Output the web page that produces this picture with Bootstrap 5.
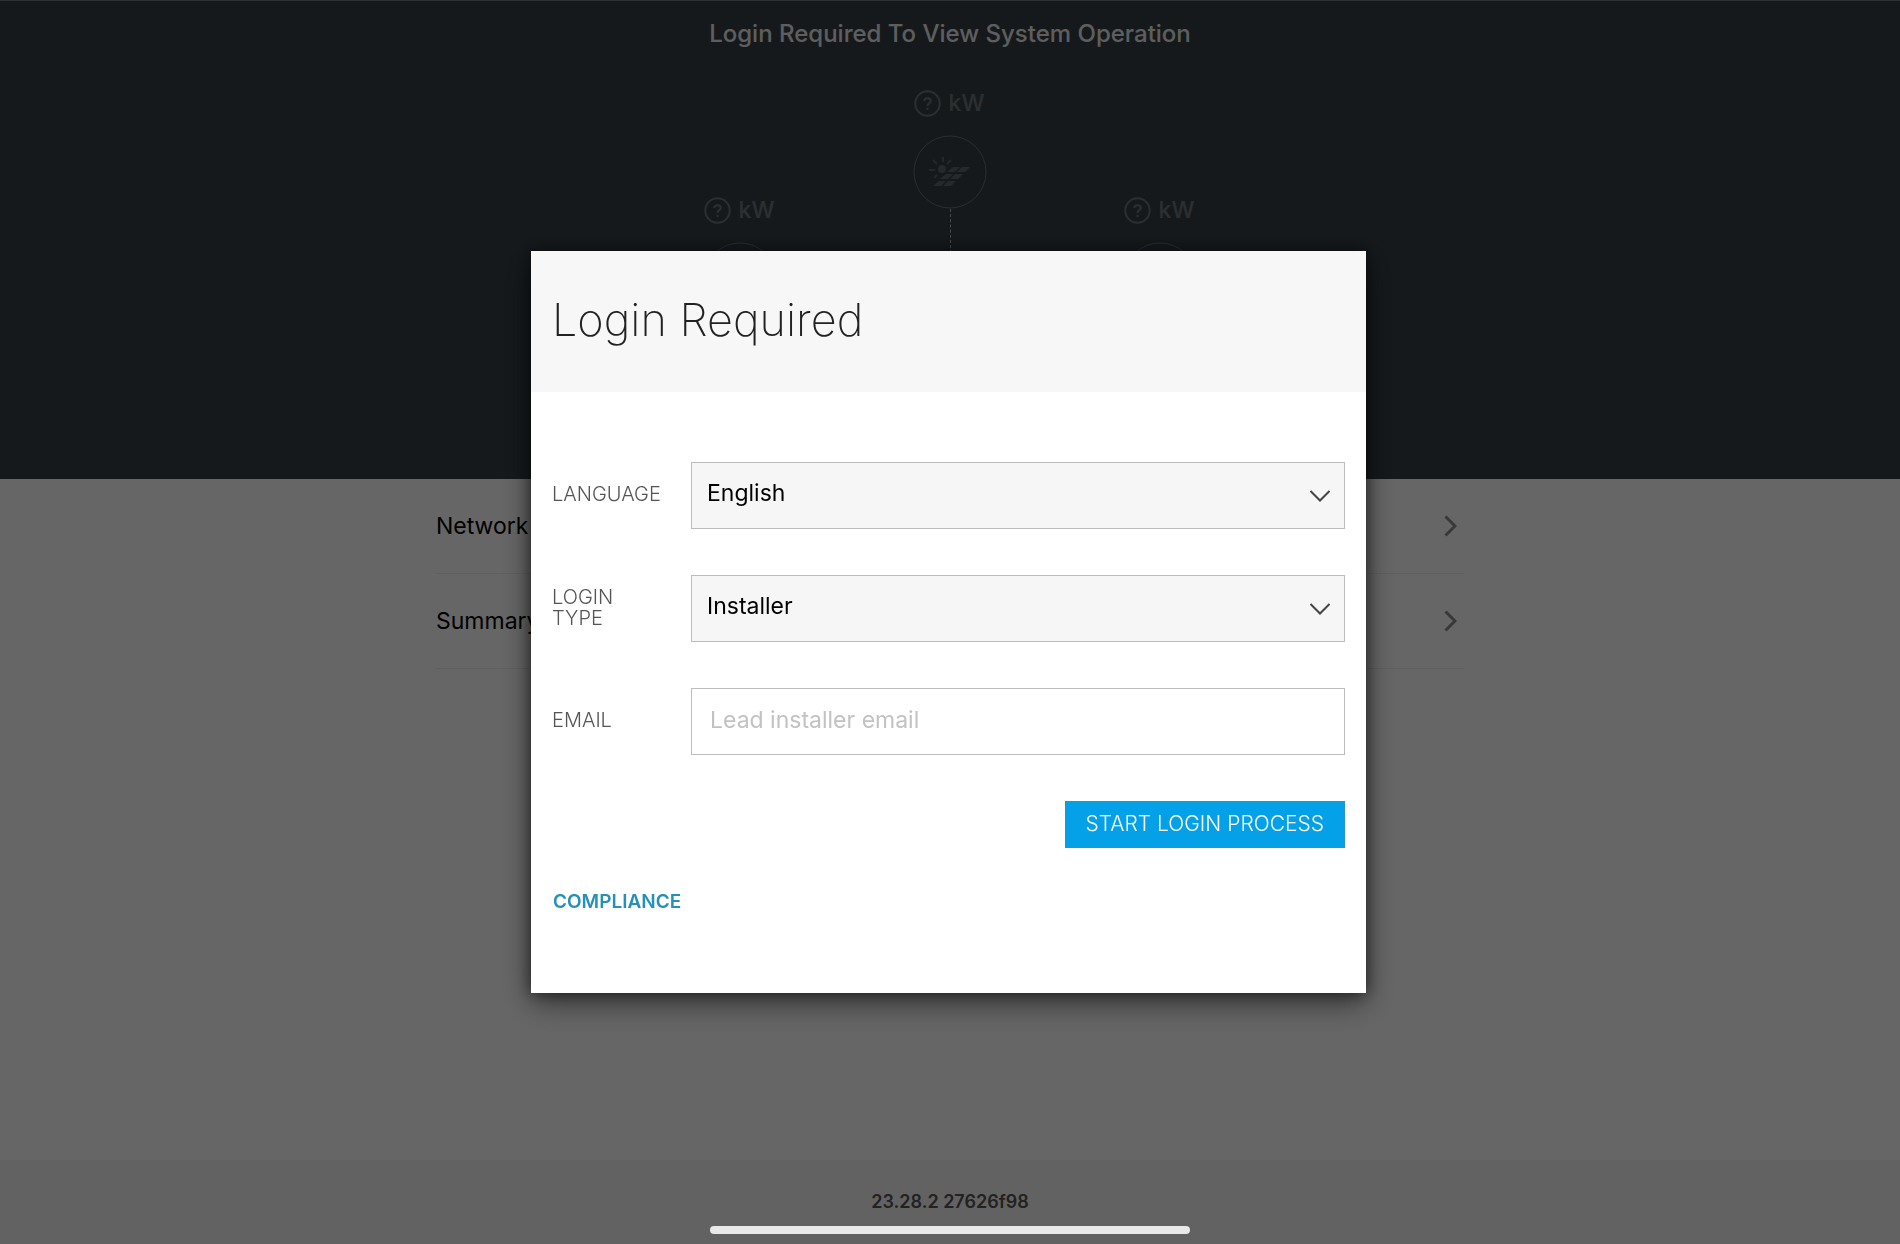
<!DOCTYPE html>
<html lang="en">
<head>
<meta charset="utf-8">
<meta name="viewport" content="width=device-width, initial-scale=1">
<title>Login Required</title>
<link href="https://cdn.jsdelivr.net/npm/bootstrap@5.3.0/dist/css/bootstrap.min.css" rel="stylesheet">
<style>
  body { font-family: Inter, "Liberation Sans", sans-serif; font-size: 23px; line-height: 28px; color: #000; background: #fff; }
  .flow-panel { background: #373f46; height: 479px; border-top: 1px solid #747c82; overflow: hidden; }
  .flow-title { font-size: 24px; line-height: 28px; font-weight: 500; color: #fff; opacity: .9; padding-top: 19px; }
  .flow-map { color: #fff; padding-top: 41px; }
  .flow-col { width: 210px; }
  .flow-side { padding-top: 107px; }
  .flow-reading { font-size: 23px; font-weight: 500; gap: 8px; line-height: 28px; opacity: .28; padding-right: 2px; }
  .flow-node { width: 74px; height: 74px; margin-top: 18px; opacity: .26; }
  .flow-line { height: 70px; border-left: 1px dashed #fff; opacity: .65; }
  .page-list { width: 1028px; max-width: 100%; }
  .page-row { height: 95px; border-bottom: 1px solid #eee; color: #000; padding-right: 7px; }
  .page-foot { height: 84px; background: #f5f5f5; font-size: 18px; font-weight: 600; line-height: 22px; color: #555; padding-top: 31px; }
  .modal-backdrop.show { opacity: .6; }
  .modal { padding-right: 3px; }
  .login-dialog { --bs-modal-width: 835px; }
  .login-box { border: 0; border-radius: 0; box-shadow: 0 10px 28px rgba(0,0,0,.5), 0 0 14px rgba(0,0,0,.5); }
  .login-head { height: 141px; background: #f7f7f7; padding: 0 21px 4px; }
  .login-title { font-size: 45px; line-height: 52px; font-weight: 200; color: #222; }
  .login-form { padding: 70px 21px 79px; }
  .login-fields { display: flex; flex-direction: column; gap: 46px; }
  .field-label { width: 139px; padding: 0 28px 2px 0; font-size: 20px; line-height: 21px; font-weight: 300; color: #555; }
  .field-box { height: 67px; border: 1px solid #bdbdbd; border-radius: 0; font-size: 23px; line-height: 28px; color: #000; }
  select.field-box { padding: 0 60px 5px 15px; background-color: #f6f6f6; background-size: 22px 14px; background-position: right 13px center;
    background-image: url("data:image/svg+xml,%3Csvg xmlns='http://www.w3.org/2000/svg' viewBox='0 0 22 14'%3E%3Cpath d='M1.5 2L11 11.5L20.5 2' fill='none' stroke='%23444' stroke-width='2'/%3E%3C/svg%3E"); }
  input.field-box { padding: 0 18px 4px; }
  input.field-box::placeholder { color: #c2c2c2; }
  .start-btn { height: 47px; padding: 0 20px 2px; border: 1px solid #2b93cc; border-radius: 0; background: #05a1e8; color: #fff; font-size: 21px; line-height: 24px; font-weight: 300; }
  .compliance-link { font-size: 19px; line-height: 22px; font-weight: 600; color: #2590b8; margin: 43px 0 0 1px; }
  .home-bar { z-index: 1060; width: 480px; height: 8px; border-radius: 4px; background: #e9e9e9; margin-bottom: 10px; }
</style>
</head>
<body>
<div class="d-flex flex-column min-vh-100">
  <header class="flow-panel">
    <div class="flow-title text-center">Login Required To View System Operation</div>
    <div class="flow-map d-flex justify-content-center align-items-start">
      <div class="flow-col flow-side d-flex flex-column align-items-center">
        <div class="flow-reading d-flex align-items-center">
          <svg width="27" height="27" viewBox="0 0 27 27" fill="none" stroke="currentColor" stroke-width="2"><circle cx="13.5" cy="13.5" r="12.2"/><path d="M10.2 11C10.4 7.4 16.8 7.4 16.8 11C16.8 13.2 13.5 13.2 13.5 16M13.5 17.8V20"/></svg>
          <span>kW</span>
        </div>
        <svg class="flow-node" viewBox="0 0 74 74" fill="none" stroke="currentColor"><circle cx="37" cy="37" r="36"/></svg>
      </div>
      <div class="flow-col d-flex flex-column align-items-center">
        <div class="flow-reading d-flex align-items-center">
          <svg width="27" height="27" viewBox="0 0 27 27" fill="none" stroke="currentColor" stroke-width="2"><circle cx="13.5" cy="13.5" r="12.2"/><path d="M10.2 11C10.4 7.4 16.8 7.4 16.8 11C16.8 13.2 13.5 13.2 13.5 16M13.5 17.8V20"/></svg>
          <span>kW</span>
        </div>
        <svg class="flow-node" viewBox="0 0 74 74" fill="none" stroke="currentColor">
          <circle cx="37" cy="37" r="36"/>
          <g fill="currentColor" stroke="none" opacity=".8">
            <circle cx="29" cy="34" r="4"/>
            <path d="M40 32h7l-5 5h-8zM49 32h8l-5 5h-8zM33 39h7l-5 5h-8zM42 39h8l-5 5h-8zM26 46h7l-5 5h-8zM35 46h8l-5 5h-8z"/>
          </g>
          <path d="M30 27v-5M24 29l-4-4M22 35h-6M34 29l4-4M24 40l-3 3" stroke-width="2" opacity=".7"/>
        </svg>
        <div class="flow-line"></div>
      </div>
      <div class="flow-col flow-side d-flex flex-column align-items-center">
        <div class="flow-reading d-flex align-items-center">
          <svg width="27" height="27" viewBox="0 0 27 27" fill="none" stroke="currentColor" stroke-width="2"><circle cx="13.5" cy="13.5" r="12.2"/><path d="M10.2 11C10.4 7.4 16.8 7.4 16.8 11C16.8 13.2 13.5 13.2 13.5 16M13.5 17.8V20"/></svg>
          <span>kW</span>
        </div>
        <svg class="flow-node" viewBox="0 0 74 74" fill="none" stroke="currentColor"><circle cx="37" cy="37" r="36"/></svg>
      </div>
    </div>
  </header>
  <main class="page-list mx-auto flex-grow-1">
    <a href="#network" class="page-row d-flex align-items-center justify-content-between text-decoration-none">
      <span>Network</span>
      <svg width="13" height="22" viewBox="0 0 13 22" fill="none" stroke="#8c8c8c" stroke-width="3"><path d="M1.5 1.5L11 11L1.5 20.5"/></svg>
    </a>
    <a href="#summary" class="page-row d-flex align-items-center justify-content-between text-decoration-none">
      <span>Summary</span>
      <svg width="13" height="22" viewBox="0 0 13 22" fill="none" stroke="#8c8c8c" stroke-width="3"><path d="M1.5 1.5L11 11L1.5 20.5"/></svg>
    </a>
  </main>
  <footer class="page-foot text-center">23.28.2 27626f98</footer>
</div>

<div class="modal-backdrop show"></div>
<div class="modal d-block" role="dialog" aria-modal="true" aria-labelledby="loginTitle">
  <div class="modal-dialog modal-dialog-centered login-dialog">
    <div class="modal-content login-box">
      <div class="login-head d-flex align-items-center">
        <h1 class="login-title mb-0" id="loginTitle">Login Required</h1>
      </div>
      <form class="login-form">
        <div class="login-fields">
          <div class="d-flex align-items-center">
            <label class="field-label flex-shrink-0" for="language">LANGUAGE</label>
            <select class="form-select field-box" id="language"><option>English</option></select>
          </div>
          <div class="d-flex align-items-center">
            <label class="field-label flex-shrink-0" for="loginType">LOGIN TYPE</label>
            <select class="form-select field-box" id="loginType"><option>Installer</option></select>
          </div>
          <div class="d-flex align-items-center">
            <label class="field-label flex-shrink-0" for="email">EMAIL</label>
            <input class="form-control field-box" type="email" id="email" placeholder="Lead installer email">
          </div>
          <div class="d-flex justify-content-end">
            <button type="button" class="btn start-btn">START LOGIN PROCESS</button>
          </div>
        </div>
        <a href="#compliance" class="compliance-link d-inline-block text-decoration-none">COMPLIANCE</a>
      </form>
    </div>
  </div>
</div>
<div class="fixed-bottom home-bar mx-auto"></div>
<script src="https://cdn.jsdelivr.net/npm/bootstrap@5.3.0/dist/js/bootstrap.bundle.min.js"></script>
</body>
</html>
